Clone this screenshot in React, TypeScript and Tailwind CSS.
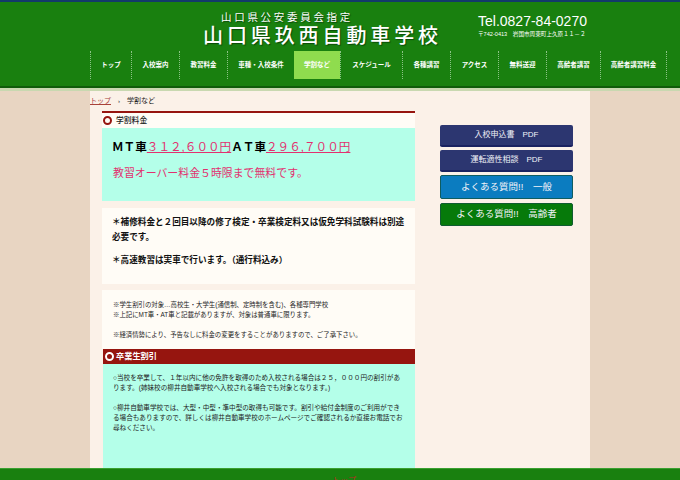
const nav = [
  { t: "トップ", w: "w-[41px]" },
  { t: "入校案内", w: "w-[48px]" },
  { t: "教習料金", w: "w-[48px]" },
  { t: "車種・入校条件", w: "w-[67px]" },
  { t: "学割など", w: "w-[46px]", active: true },
  { t: "スケジュール", w: "w-[62px]" },
  { t: "各種講習", w: "w-[48px]" },
  { t: "アクセス", w: "w-[48px]" },
  { t: "無料送迎", w: "w-[48px]" },
  { t: "高齢者講習", w: "w-[54px]" },
  { t: "高齢者講習料金", w: "w-[67px]" },
];

function Ring({ white }: { white?: boolean }) {
  return (
    <span
      className={
        "inline-block w-[9px] h-[9px] rounded-full border-2 bg-transparent shrink-0 " +
        (white ? "border-white" : "border-[#96150f]")
      }
    />
  );
}

function Btn({ c, h, size, children }: { c: string; h: string; size: string; children: React.ReactNode }) {
  return (
    <div className={`${c} ${h} ${size} w-[133px] rounded-[2px] flex items-center justify-center text-[#f2f2f8]`}>
      {children}
    </div>
  );
}

export default function App() {
  return (
    <div className="relative w-[680px] h-[480px] overflow-hidden bg-[#e8d5c2] font-['Liberation_Sans','Noto_Sans_CJK_JP',sans-serif] text-[#222]">
      <div className="h-[2px] bg-[#123a6b]" />
      <header className="h-[84px] bg-[#19800f] relative">
        <div className="flex h-[49px]">
          <div className="w-[203px] shrink-0" />
          <div className="w-[239px] shrink-0 flex flex-col items-start text-white font-['Noto_Sans_CJK_JP',sans-serif] [text-shadow:1px_1px_1px_#0b4a08] whitespace-nowrap overflow-hidden">
            <div className="text-[10.5px] leading-[12px] mt-[9px] ml-[18px] tracking-[2.7px]">山口県公安委員会指定</div>
            <div className="text-[20px] leading-[24px] tracking-[3.9px] font-medium">山口県玖西自動車学校</div>
          </div>
          <div className="w-[108px] ml-[36px] text-white flex flex-col items-start">
            <div className="text-[14px] leading-[17px] mt-[11px] whitespace-nowrap">Tel.0827-84-0270</div>
            <div className="text-[5.6px] leading-[8px] whitespace-nowrap">〒742-0413　岩国市周東町上久原１１－２</div>
          </div>
        </div>
        <nav className="flex ml-[90px] h-[28px]">
          {nav.map((n) => (
            <div
              key={n.t}
              className={
                `${n.w} shrink-0 h-[28px] flex items-center justify-center text-[6.5px] font-bold text-white whitespace-nowrap ` +
                (n.active
                  ? "bg-[#8fdc4e]"
                  : "border-l border-dotted border-[#8cc486] last:border-r")
              }
            >
              {n.t}
            </div>
          ))}
        </nav>
      </header>
      <div className="h-[2px] bg-[#0f5c0a]" />
      <div className="h-[3px] bg-[#c8d8b0]" />
      <div className="flex justify-center">
        <main className="w-[500px] min-h-[400px] bg-[#fbf1e8] flex">
          <div className="w-[325px] shrink-0">
            <div className="h-[20px] flex items-center text-[7px] gap-[7px]">
              <span className="text-[#a8423a] underline">トップ</span>
              <span className="text-[6px]">›</span>
              <span>学割など</span>
            </div>
            <div className="ml-[12px] w-[313px]">
              <div className="border-t-[2px] border-[#96150f] h-[17px] bg-[#fffcf6] flex items-center gap-[4px] pl-[1px] text-[7.8px] font-medium">
                <Ring />
                <span>学割料金</span>
              </div>
              <div className="bg-[#b4ffe9] h-[73px] pl-[10px]">
                <div className="pt-[10px] text-[11.6px] leading-[18px] font-bold text-black whitespace-nowrap">
                  ＭＴ車<span className="text-[#e2306f] underline font-normal">３１２,６００円</span>ＡＴ車<span className="text-[#e2306f] underline font-normal">２９６,７００円</span>
                </div>
                <div className="mt-[9px] pl-[1px] text-[10.9px] leading-[16px] text-[#e2306f]">教習オーバー料金５時限まで無料です。</div>
              </div>
              <div className="mt-[7px] bg-[#fffcf6] h-[76px] pl-[10px] pr-[8px] pt-[7px] text-[8.6px] leading-[15px] font-bold text-[#111]">
                <p>＊補修料金と２回目以降の修了検定・卒業検定料又は仮免学科試験料は別途必要です。</p>
                <p className="mt-[8px]">＊高速教習は実車で行います。（通行料込み）</p>
              </div>
              <div className="mt-[6px] bg-[#fffcf6] h-[59px] px-[11px] pt-[10px] text-[6.4px] leading-[10px] text-[#222]">
                <p>※学生割引の対象…高校生・大学生(通信制、定時制を含む)、各種専門学校</p>
                <p>※上記にMT車・AT車と記載がありますが、対象は普通車に限ります。</p>
                <p className="mt-[10px]">※経済情勢により、予告なしに料金の変更をすることがありますので、ご了承下さい。</p>
              </div>
              <div className="ml-[1px] h-[15px] bg-[#96150f] flex items-center gap-[2px] pl-[2px] text-[8.2px] font-bold text-white">
                <Ring white />
                <span className="pt-[1px]">卒業生割引</span>
              </div>
              <div className="ml-[1px] bg-[#b4ffe9] h-[110px] px-[10px] pt-[9px] text-[6.6px] leading-[10px] text-[#222]">
                <p>○当校を卒業して、１年以内に他の免許を取得のため入校される場合は２５，０００円の割引があります。(姉妹校の柳井自動車学校へ入校される場合でも対象となります。)</p>
                <p className="mt-[10px]">○柳井自動車学校では、大型・中型・準中型の取得も可能です。割引や給付金制度のご利用ができる場合もありますので、詳しくは柳井自動車学校のホームページでご確認されるか直接お電話でお尋ねください。</p>
              </div>
            </div>
          </div>
          <aside className="ml-[25px] pt-[34px] flex flex-col gap-[3px]">
            <Btn c="bg-[#2c3670] border-b-2 border-[#1a2260]" h="h-[22px]" size="text-[8px]">入校申込書　PDF</Btn>
            <Btn c="bg-[#2c3670] border-b-2 border-[#1a2260]" h="h-[22px]" size="text-[8px]">運転適性相談　PDF</Btn>
            <Btn c="bg-[#0b7cc0] border border-[#0f5c60]" h="h-[24px]" size="text-[9.5px]">よくある質問!!　一般</Btn>
            <div className="mt-[1px]">
              <Btn c="bg-[#067a0a] border border-[#0f5c30]" h="h-[23px]" size="text-[9.5px]">よくある質問!!　高齢者</Btn>
            </div>
          </aside>
        </main>
      </div>
      <footer className="absolute left-0 right-0 bottom-0 h-[12px] bg-[#19800f] border-t border-[#3aa030]">
        <span className="absolute left-[332px] top-[6px] text-[8px] text-[#b03020]">トップ</span>
      </footer>
    </div>
  );
}
